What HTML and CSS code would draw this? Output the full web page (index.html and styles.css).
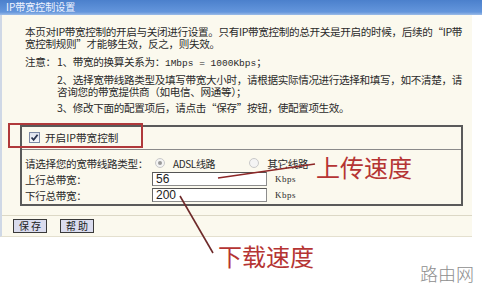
FILE: index.html
```html
<!DOCTYPE html>
<html lang="zh-CN">
<head>
  <meta charset="UTF-8"/>
  <title>IP带宽控制设置</title>
  <link rel="stylesheet" href="styles.css">
</head>
<body>

<div class="page">
  <div class="titlebar">IP带宽控制设置</div>

  <div class="panel">
    <div class="intro">
      <p class="lead">本页对IP带宽控制的开启与关闭进行设置。只有IP带宽控制的总开关是开启的时候，后续的“IP带宽控制规则”才能够生效，反之，则失效。</p>
      <div class="notes">
        <span class="notes-label">注意：</span>
        <ul class="notes-list">
          <li>1、带宽的换算关系为：<span class="latin">1Mbps = 1000Kbps</span>；</li>
          <li>2、选择宽带线路类型及填写带宽大小时，请根据实际情况进行选择和填写，如不清楚，请咨询您的带宽提供商（如电信、网通等）；</li>
          <li>3、修改下面的配置项后，请点击“保存”按钮，使配置项生效。</li>
        </ul>
      </div>
    </div>

    <div class="setbox">
      <div class="enable-row">
        <span class="check">
          <svg width="9" height="9" viewBox="0 0 9 9"><path d="M1.5 4.5 L3.6 6.8 L7.6 1.8" fill="none" stroke="#2a3550" stroke-width="1.8"/></svg>
        </span>
        <span>开启IP带宽控制</span>
      </div>
      <div class="form">
        <div class="row">
          <span class="label">请选择您的宽带线路类型：</span>
          <span class="radio on"></span><span class="opt latin-s">ADSL线路</span>
          <span class="radio"></span><span class="opt">其它线路</span>
        </div>
        <div class="row">
          <span class="label">上行总带宽：</span>
          <input class="field" type="text" value="56">
          <span class="unit">Kbps</span>
        </div>
        <div class="row">
          <span class="label">下行总带宽：</span>
          <input class="field" type="text" value="200">
          <span class="unit">Kbps</span>
        </div>
      </div>
    </div>

    <div class="actions">
      <button class="btn">保 存</button>
      <button class="btn">帮 助</button>
    </div>
  </div>

  <!-- annotations drawn on top of the screenshot -->
  <div class="mark-box"></div>
  <svg class="mark-lines" width="482" height="287" viewBox="0 0 482 287">
    <path d="M218 178 L315 164" stroke="#8c2727" stroke-width="1.6" fill="none"/>
    <path d="M180 196 L213 253" stroke="#6e2a2a" stroke-width="1.6" fill="none"/>
  </svg>
  <div class="mark-text up">上传速度</div>
  <div class="mark-text down">下载速度</div>
  <div class="watermark">路由网</div>
</div>

</body>
</html>
```

FILE: styles.css
```css
html, body {
  margin: 0; padding: 0; background: #fff;
}
.page {
  position: relative;
  width: 482px;
  height: 287px;
  overflow: hidden;
  font-family: "Noto Sans CJK SC", sans-serif;
  font-size: 10.6px;
  color: #2a2a2a;
}
.titlebar {
  height: 15px;
  line-height: 14px;
  padding-left: 6px;
  font-size: 10px;
  color: #eef3ff;
  background: linear-gradient(#4b80cc, #6496dc 80%, #9dbde8);
}
.panel {
  width: 470px;
  background: #fbf9ee;
  border-left: 2px solid #cfd8e6;
  border-bottom: 1px solid #e4e0cf;
}
.intro {
  padding: 11px 0 0 23px;
  line-height: 12px;
  letter-spacing: -0.35px;
}
.lead {
  margin: 0 0 6px;
  width: 440px;
}
.notes {
  display: flex;
}
.notes-label {
  width: 32px;
  flex: none;
  white-space: nowrap;
}
.notes-list {
  margin: 0; padding: 0;
  list-style: none;
  width: 408px;
  display: flex;
  flex-direction: column;
  gap: 4px;
}
.latin {
  font-family: "Liberation Mono", monospace;
  font-size: 9.5px;
  letter-spacing: 0;
}
.setbox {
  margin: 11px 0 9px 18px;
  width: 439px;
  border: 2px solid #5a5a5a;
}
.enable-row {
  height: 23px;
  display: flex;
  align-items: center;
  gap: 5px;
  padding: 0 0 2px 7px;
  box-sizing: border-box;
  border-bottom: 1px solid #8a8a8a;
}
.check {
  width: 9px; height: 9px;
  border: 1px solid #7d8aa6;
  background: linear-gradient(#dfe3ee, #f6f7fb);
  display: flex;
}
.form {
  padding: 5px 0 1px 3px;
  letter-spacing: -0.35px;
}
.row {
  height: 16px;
  display: flex;
  align-items: center;
}
.label {
  width: 127px;
  flex: none;
  white-space: nowrap;
}
.radio {
  width: 8px; height: 8px;
  margin: 0 8px 0 3px;
  border-radius: 50%;
  border: 1px solid #c9c9c9;
  background: #f4f4f4;
  position: relative;
}
.radio.on::after {
  content: "";
  position: absolute;
  top: 2px; left: 2px;
  width: 4px; height: 4px;
  border-radius: 50%;
  background: #9a9a9a;
}
.opt {
  margin-right: 31px;
}
.latin-s {
  font-size: 10px;
}
.field {
  width: 115px;
  height: 14px;
  box-sizing: border-box;
  margin: 0;
  padding: 0 0 0 3px;
  border: 1px solid #8d8d8d;
  border-top-color: #555;
  border-left-color: #666;
  background: #fff;
  font-family: "Liberation Sans", sans-serif;
  font-size: 12px;
  letter-spacing: 0;
  color: #222;
}
.unit {
  margin-left: 8px;
  font-family: "Liberation Serif", serif;
  font-size: 9px;
  letter-spacing: 0.5px;
}
.actions {
  border-top: 1px solid #dcd8c6;
  padding: 3px 0 3px 11px;
  display: flex;
  gap: 13px;
}
.btn {
  width: 34px;
  height: 14px;
  padding: 0;
  border: 1px solid #3a3a3a;
  background: #dadcee;
  font-family: "Noto Sans CJK SC", sans-serif;
  font-size: 10px;
  line-height: 12px;
  color: #222;
}
.mark-box {
  position: absolute;
  left: 8px; top: 123px;
  width: 131px; height: 21px;
  border: 2px solid #b0393b;
}
.mark-lines {
  position: absolute;
  left: 0; top: 0;
}
.mark-text {
  position: absolute;
  font-size: 24px;
  line-height: 24px;
  color: #b53433;
}
.mark-text.up {
  left: 316px; top: 155px;
}
.mark-text.down {
  left: 218px; top: 244px;
}
.watermark {
  position: absolute;
  left: 420px; top: 263px;
  font-size: 18px;
  line-height: 20px;
  font-weight: 300;
  color: #8e8e8e;
}
```
